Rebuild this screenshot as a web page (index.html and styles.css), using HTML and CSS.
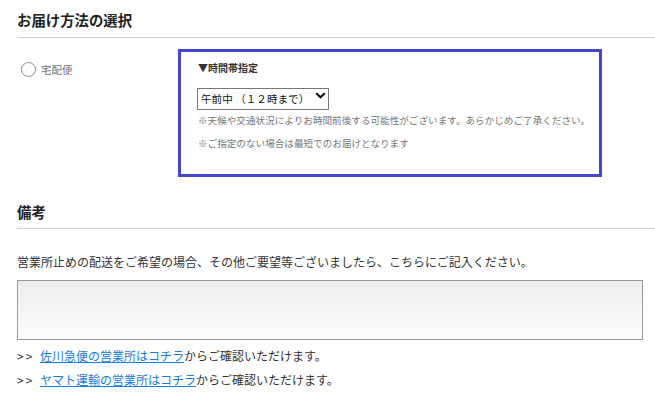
FILE: index.html
```html
<!DOCTYPE html>
<html lang="ja">
<head>
<meta charset="utf-8">
<link rel="stylesheet" href="styles.css">
</head>
<body>
<div class="page">
  <h2 class="sec-title">お届け方法の選択</h2>
  <div class="delivery">
    <div class="opt">
      <span class="radio"></span>
      <span class="opt-label">宅配便</span>
    </div>
    <div class="timebox">
      <div class="tb-title">▼時間帯指定</div>
      <div class="sel-wrap">
        <select class="sel">
          <option>午前中 （１２時まで）</option>
        </select>
        <svg class="chev" width="11" height="7" viewBox="0 0 11 7"><path d="M1.2 1.2 L5.5 5.3 L9.8 1.2" fill="none" stroke="#111" stroke-width="2.2"/></svg>
      </div>
      <p class="note n1">※天候や交通状況によりお時間前後する可能性がございます。あらかじめご了承ください。</p>
      <p class="note n2">※ご指定のない場合は最短でのお届けとなります</p>
    </div>
  </div>
  <h2 class="sec-title sec2">備考</h2>
  <p class="desc">営業所止めの配送をご希望の場合、その他ご要望等ございましたら、こちらにご記入ください。</p>
  <textarea class="memo"></textarea>
  <p class="link-line first"><span class="arrows">&gt;&gt;</span><a href="#">佐川急便の営業所はコチラ</a>からご確認いただけます。</p>
  <p class="link-line"><span class="arrows">&gt;&gt;</span><a href="#">ヤマト運輸の営業所はコチラ</a>からご確認いただけます。</p>
</div>
</body>
</html>
```

FILE: styles.css
```css
html, body {
  margin: 0;
  padding: 0;
  background: #fff;
}
body {
  font-family: "Noto Sans CJK JP", "Noto Sans", sans-serif;
  color: #333;
  width: 655px;
  overflow: hidden;
}
.page {
  padding-left: 17px;
}
.sec-title {
  margin: 10px 0 0 0;
  font-size: 14.4px;
  line-height: 20px;
  font-weight: bold;
  color: #222;
  padding-bottom: 7px;
  border-bottom: 1px solid #cfcfcf;
}
.sec2 {
  margin-top: 25px;
  padding-bottom: 6px;
}
.delivery {
  display: flex;
  align-items: flex-start;
  margin-top: 11px;
}
.opt {
  width: 161px;
  display: flex;
  align-items: center;
  padding-top: 13px;
  padding-left: 4px;
  box-sizing: border-box;
}
.radio {
  width: 15px;
  height: 15px;
  box-sizing: border-box;
  border: 1px solid #8a8a8a;
  border-radius: 50%;
  background: #fff;
}
.opt-label {
  margin-left: 5px;
  font-size: 10.5px;
  line-height: 15px;
  color: #6f6f6f;
}
.timebox {
  width: 424px;
  box-sizing: border-box;
  border: 3px solid #4444cf;
  padding: 9px 4px 24px 17px;
}
.tb-title {
  font-size: 10px;
  line-height: 14px;
  font-weight: bold;
  color: #333;
}
.sel-wrap {
  position: relative;
  width: 132px;
  height: 22px;
  margin-top: 9px;
  margin-left: -1px;
}
.sel {
  -webkit-appearance: none;
  appearance: none;
  width: 132px;
  height: 22px;
  box-sizing: border-box;
  border: 1px solid #767676;
  border-radius: 0;
  background: #fff;
  padding: 0 0 0 3px;
  font-family: "Noto Sans CJK JP", sans-serif;
  font-size: 10.6px;
  color: #111;
  margin: 0;
}
.chev {
  position: absolute;
  right: 3px;
  top: 8px;
}
.note {
  margin: 0;
  font-size: 9.6px;
  line-height: 14px;
  color: #777;
  white-space: nowrap;
}
.n1 { margin-top: 7px; }
.n2 { margin-top: 9px; }
.desc {
  margin: 24px 0 0 0;
  font-size: 12px;
  line-height: 18px;
  color: #333;
}
.memo {
  display: block;
  width: 626px;
  height: 60px;
  box-sizing: border-box;
  margin: 9px 0 0 0;
  border: 1px solid #999;
  background: linear-gradient(to bottom, #ededed, #fdfdfd);
  resize: none;
  padding: 0;
}
.link-line {
  margin: 0;
  font-size: 12px;
  line-height: 24px;
  color: #333;
}
.link-line.first {
  margin-top: 4px;
}
.arrows {
  display: inline-block;
  width: 23px;
  letter-spacing: 2px;
}
.link-line a {
  color: #1a7ddc;
  text-decoration: underline;
}
```
